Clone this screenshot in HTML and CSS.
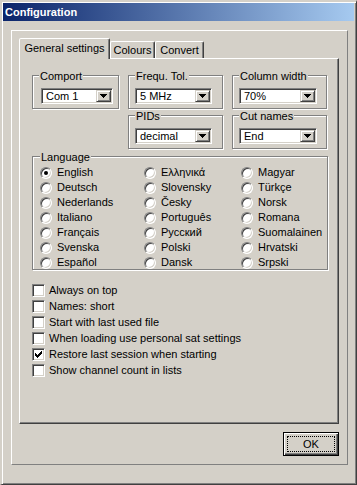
FILE: index.html
```html
<!DOCTYPE html>
<html lang="en">
<head>
    <meta charset="UTF-8">
    <title>Configuration</title>
    <link rel="stylesheet" href="styles.css">
</head>
<body>
    <div class="window">
        <div class="titlebar">Configuration</div>

        <div class="frame">
            <div class="tabs">
                <div class="tab tab-active">General settings</div>
                <div class="tab tab-colours">Colours</div>
                <div class="tab tab-convert">Convert</div>
            </div>

            <div class="pane">
                <div class="combos">
                    <div class="group">
                        <div class="group-title">Comport</div>
                        <div class="combo combo-comport">
                            <span class="combo-value">Com 1</span>
                            <span class="drop"><svg width="7" height="4" viewBox="0 0 7 4"><path d="M0 0h7v1h-1v1h-1v1h-1v1h-1v-1h-1v-1h-1v-1h-1z"/></svg></span>
                        </div>
                    </div>
                    <div class="group">
                        <div class="group-title">Frequ. Tol.</div>
                        <div class="combo combo-mid">
                            <span class="combo-value">5 MHz</span>
                            <span class="drop"><svg width="7" height="4" viewBox="0 0 7 4"><path d="M0 0h7v1h-1v1h-1v1h-1v1h-1v-1h-1v-1h-1v-1h-1z"/></svg></span>
                        </div>
                    </div>
                    <div class="group">
                        <div class="group-title">Column width</div>
                        <div class="combo combo-wide">
                            <span class="combo-value">70%</span>
                            <span class="drop"><svg width="7" height="4" viewBox="0 0 7 4"><path d="M0 0h7v1h-1v1h-1v1h-1v1h-1v-1h-1v-1h-1v-1h-1z"/></svg></span>
                        </div>
                    </div>
                    <div class="group group-pids">
                        <div class="group-title">PIDs</div>
                        <div class="combo combo-mid">
                            <span class="combo-value">decimal</span>
                            <span class="drop"><svg width="7" height="4" viewBox="0 0 7 4"><path d="M0 0h7v1h-1v1h-1v1h-1v1h-1v-1h-1v-1h-1v-1h-1z"/></svg></span>
                        </div>
                    </div>
                    <div class="group">
                        <div class="group-title">Cut names</div>
                        <div class="combo combo-wide">
                            <span class="combo-value">End</span>
                            <span class="drop"><svg width="7" height="4" viewBox="0 0 7 4"><path d="M0 0h7v1h-1v1h-1v1h-1v1h-1v-1h-1v-1h-1v-1h-1z"/></svg></span>
                        </div>
                    </div>
                </div>

                <div class="group group-lang">
                    <div class="group-title">Language</div>
                    <div class="radios">
                        <label class="option"><span class="radio checked"></span>English</label>
                        <label class="option"><span class="radio"></span>Deutsch</label>
                        <label class="option"><span class="radio"></span>Nederlands</label>
                        <label class="option"><span class="radio"></span>Italiano</label>
                        <label class="option"><span class="radio"></span>Français</label>
                        <label class="option"><span class="radio"></span>Svenska</label>
                        <label class="option"><span class="radio"></span>Español</label>

                        <label class="option"><span class="radio"></span>Ελληνικά</label>
                        <label class="option"><span class="radio"></span>Slovensky</label>
                        <label class="option"><span class="radio"></span>Česky</label>
                        <label class="option"><span class="radio"></span>Português</label>
                        <label class="option"><span class="radio"></span>Русский</label>
                        <label class="option"><span class="radio"></span>Polski</label>
                        <label class="option"><span class="radio"></span>Dansk</label>

                        <label class="option"><span class="radio"></span>Magyar</label>
                        <label class="option"><span class="radio"></span>Türkçe</label>
                        <label class="option"><span class="radio"></span>Norsk</label>
                        <label class="option"><span class="radio"></span>Romana</label>
                        <label class="option"><span class="radio"></span>Suomalainen</label>
                        <label class="option"><span class="radio"></span>Hrvatski</label>
                        <label class="option"><span class="radio"></span>Srpski</label>
                    </div>
                </div>

                <div class="checks">
                    <label class="option"><span class="checkbox"></span>Always on top</label>
                    <label class="option"><span class="checkbox"></span>Names: short</label>
                    <label class="option"><span class="checkbox"></span>Start with last used file</label>
                    <label class="option"><span class="checkbox"></span>When loading use personal sat settings</label>
                    <label class="option"><span class="checkbox"><svg width="7" height="7" viewBox="0 0 7 7"><path d="M0 2h1v3h-1zM1 3h1v3h-1zM2 4h1v3h-1zM3 3h1v3h-1zM4 2h1v3h-1zM5 1h1v3h-1zM6 0h1v3h-1z"/></svg></span>Restore last session when starting</label>
                    <label class="option"><span class="checkbox"></span>Show channel count in lists</label>
                </div>
            </div>

            <div class="buttons">
                <button class="button button-default"><span class="focus">OK</span></button>
            </div>
        </div>
    </div>
</body>
</html>
```

FILE: styles.css
```css
:root {
    --face: #D4D0C8;
    --shadow: #808080;
    --dark: #404040;
    --light: #FFFFFF;
    --title-from: #0A246A;
    --title-to: #A6CAF0;
}

* {
    box-sizing: border-box;
    margin: 0;
    padding: 0;
}

body {
    font-family: 'Liberation Sans', Arial, sans-serif;
    font-size: 11px;
    color: #000;
    background: var(--face);
}

.window {
    width: 357px;
    height: 485px;
    background: var(--face);
    border-style: solid;
    border-width: 2px 1px 1px 2px;
    border-color: var(--face) var(--dark) var(--dark) var(--face);
    box-shadow: inset 1px 1px var(--light), inset -1px -1px var(--shadow);
    padding: 1px 2px 2px 1px;
}

.titlebar {
    height: 18px;
    line-height: 18px;
    padding-left: 2px;
    color: var(--light);
    font-weight: bold;
    background: linear-gradient(90deg, var(--title-from), var(--title-to));
}

.frame {
    width: 337px;
    height: 435px;
    margin: 9px 0 0 8px;
    padding: 7px 0 0 7px;
    border: 1px solid;
    border-color: var(--light) var(--shadow) var(--shadow) var(--light);
}

/* tabs */
.tabs {
    display: flex;
    align-items: flex-end;
    height: 20px;
}

.tab {
    height: 17px;
    line-height: 16px;
    text-align: center;
    border: 1px solid;
    border-bottom: 0;
    border-color: var(--light) var(--dark) transparent var(--light);
    border-radius: 2px 2px 0 0;
    box-shadow: inset -1px 0 var(--shadow);
    white-space: nowrap;
}

.tab-active {
    width: 91px;
    height: 21px;
    line-height: 18px;
    margin-bottom: -1px;
    position: relative;
    z-index: 1;
    background: var(--face);
}

.tab-colours {
    width: 45px;
}

.tab-convert {
    width: 49px;
}

.pane {
    width: 320px;
    height: 366px;
    padding: 16px 0 0 12px;
    border: 1px solid;
    border-color: var(--light) var(--dark) var(--dark) var(--light);
    box-shadow: inset -1px -1px var(--shadow);
}

/* group boxes */
.combos {
    display: grid;
    grid-template-columns: 87px 95px 95px;
    column-gap: 9px;
    row-gap: 6px;
}

.group {
    height: 34px;
    padding: 0 0 0 6px;
    border: 1px solid var(--shadow);
    box-shadow: inset 1px 1px var(--light), 1px 1px var(--light);
}

.group-pids {
    grid-column: 2;
}

.group-title {
    width: fit-content;
    height: 13px;
    line-height: 13px;
    margin: -6px 0 0 0;
    padding: 0 1px;
    background: var(--face);
}

.combo {
    display: flex;
    align-items: center;
    height: 16px;
    margin-top: 5px;
    background: var(--light);
    border: 1px solid;
    border-color: var(--shadow) var(--light) var(--light) var(--shadow);
    box-shadow: inset 1px 1px var(--dark), inset -1px -1px var(--face);
    padding: 1px;
}

.combo-comport {
    width: 72px;
    margin-left: 2px;
}

.combo-mid {
    width: 77px;
}

.combo-wide {
    width: 78px;
}

.combo-value {
    flex: 1;
    padding-left: 3px;
    line-height: 12px;
}

.drop {
    display: flex;
    align-items: center;
    justify-content: center;
    width: 15px;
    height: 12px;
    background: var(--face);
    border: 1px solid;
    border-color: var(--face) var(--dark) var(--dark) var(--face);
    box-shadow: inset 1px 1px var(--light), inset -1px -1px var(--shadow);
}

.drop svg,
.checkbox svg {
    display: block;
    shape-rendering: crispEdges;
    fill: #000;
}

/* language */
.group-lang {
    width: 296px;
    height: 114px;
    margin-top: 7px;
    padding-left: 7px;
}

.radios {
    display: grid;
    grid-template-columns: 104px 97px 1fr;
    grid-template-rows: repeat(7, 13px);
    grid-auto-flow: column;
    row-gap: 2px;
    margin-top: 2px;
}

.option {
    display: flex;
    align-items: center;
    height: 13px;
    line-height: 13px;
    white-space: nowrap;
}

.radio {
    position: relative;
    flex: none;
    width: 12px;
    height: 12px;
    margin-right: 5px;
    border-radius: 50%;
    background: var(--light);
    border: 1px solid;
    border-color: var(--shadow) var(--light) var(--light) var(--shadow);
    box-shadow: inset 1px 1px var(--dark), inset -1px -1px var(--face);
}

.radio.checked::after {
    content: '';
    position: absolute;
    left: 3px;
    top: 3px;
    width: 4px;
    height: 4px;
    border-radius: 50%;
    background: #000;
}

/* checkboxes */
.checks {
    display: grid;
    row-gap: 3px;
    margin-top: 14px;
}

.checkbox {
    display: flex;
    align-items: center;
    justify-content: center;
    flex: none;
    width: 13px;
    height: 13px;
    margin-right: 4px;
    background: var(--light);
    border: 1px solid;
    border-color: var(--shadow) var(--light) var(--light) var(--shadow);
    box-shadow: inset 1px 1px var(--dark), inset -1px -1px var(--face);
}

/* buttons */
.buttons {
    display: flex;
    justify-content: flex-end;
    width: 320px;
    margin-top: 8px;
}

.button {
    width: 56px;
    height: 24px;
    font: inherit;
    color: #000;
    background: var(--face);
    border: 1px solid #000;
    box-shadow: inset 1px 1px var(--light), inset -1px -1px var(--dark), inset -2px -2px var(--shadow);
    padding: 3px 3px 3px 3px;
}

.focus {
    display: flex;
    align-items: center;
    justify-content: center;
    width: 100%;
    height: 100%;
    border: 1px dotted #000;
}
```
